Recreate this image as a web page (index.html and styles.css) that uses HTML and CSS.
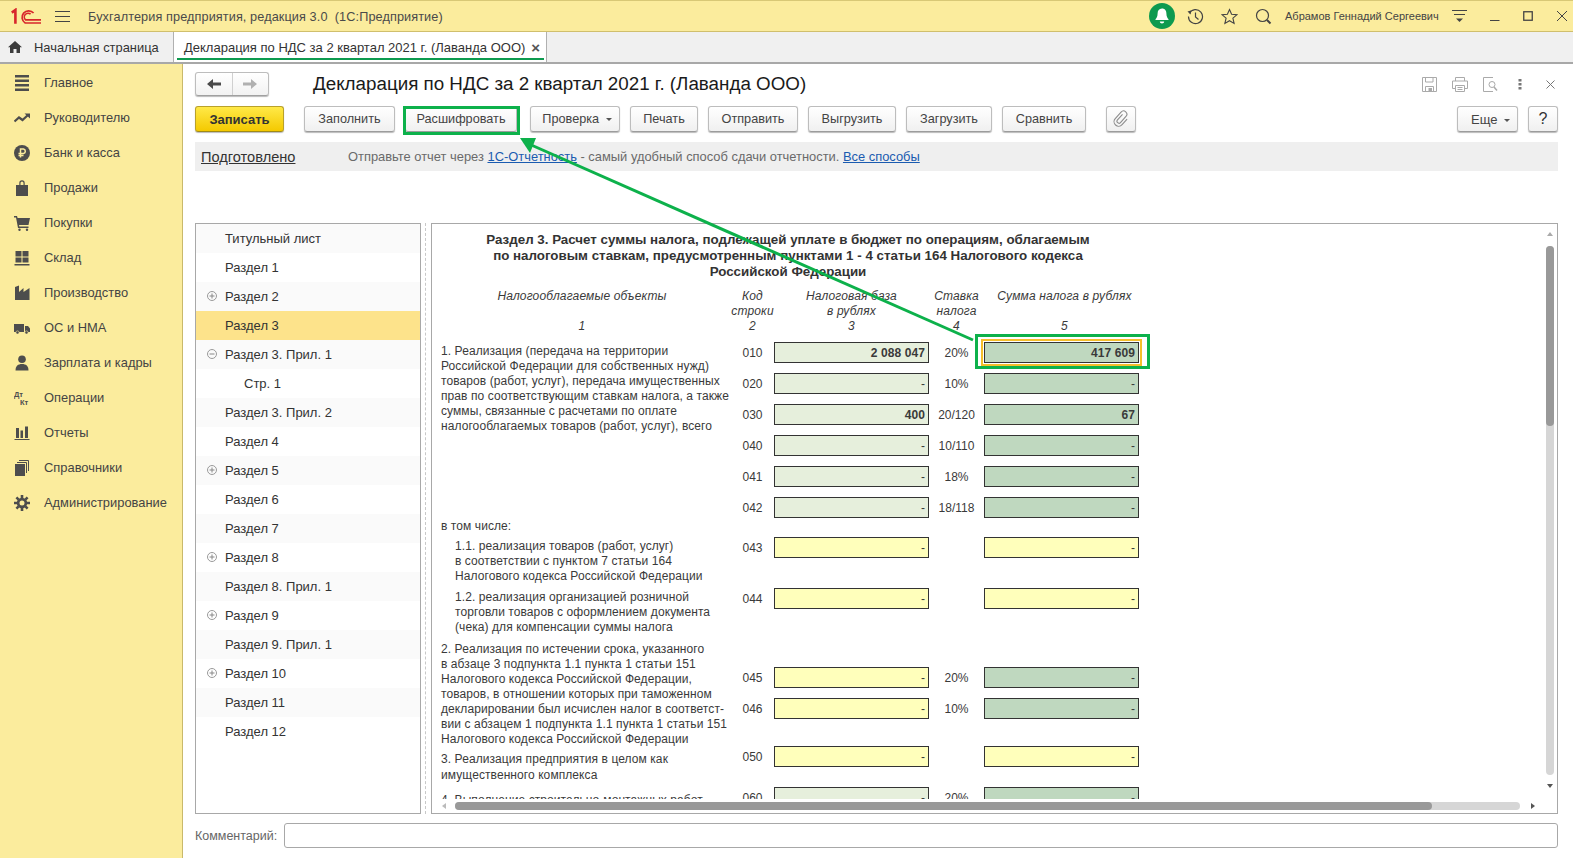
FILE: index.html
```html
<!DOCTYPE html>
<html lang="ru">
<head>
    <meta charset="UTF-8">
    <title>Декларация по НДС за 2 квартал 2021 г. (Лаванда ООО)</title>
    <link rel="stylesheet" href="styles.css">
</head>
<body>
    <div class="titlebar">
        <svg class="logo" width="30" height="17" viewBox="0 0 30 17"><path d="M0.8 4.6 4.4 2V15.8" fill="none" stroke="#d8262c" stroke-width="2.6"/><path d="M22.6 5A6.6 6.6 0 1 0 14.2 15H30" fill="none" stroke="#d8262c" stroke-width="1.7"/><path d="M19.6 6.2A3.6 3.6 0 1 0 14.6 11.9H30" fill="none" stroke="#d8262c" stroke-width="1.7"/></svg>
        <svg class="burger" width="15" height="11" viewBox="0 0 15 11"><path d="M0 .5H15M0 5.5H15M0 10.5H15" stroke="#444"/></svg>
        <span class="app-name">Бухгалтерия предприятия, редакция 3.0&nbsp; (1С:Предприятие)</span>
        <span class="spacer"></span>
        <svg class="bell" width="26" height="26" viewBox="0 0 26 26"><circle cx="13" cy="13" r="13" fill="#0d9a4f"/><path d="M13 5.5c-3 0-4.4 2.2-4.4 5 0 3-1 4.4-2.1 5.8v.7h13v-.7c-1.100-1.400-2.100-2.800-2.100-5.800 0-2.800-1.400-5-4.400-5zM10.800 18.500h4.400c0 1-1 2-2.200 2s-2.200-1-2.200-2z" fill="#fff"/></svg>
        <svg class="top-icon history" width="17" height="17" viewBox="0 0 17 17"><path d="M2.400 5.200A7 7 0 1 1 1.500 8.500M8.500 4.500V9l3 2.500" fill="none" stroke="#444" stroke-width="1.200"/><path d="M0.500 3.500 4 2.500 3.700 6.500z" fill="#444"/></svg>
        <svg class="top-icon star" width="17" height="17" viewBox="0 0 17 17"><path d="M8.500 1.500 10.600 6.300 15.800 6.800 11.900 10.200 13.100 15.400 8.500 12.700 3.900 15.400 5.100 10.200 1.200 6.800 6.400 6.300z" fill="none" stroke="#444" stroke-width="1.100"/></svg>
        <svg class="top-icon search" width="17" height="17" viewBox="0 0 17 17"><circle cx="7.500" cy="7.500" r="6" fill="none" stroke="#444" stroke-width="1.200"/><path d="M12 12 15.500 15.500" stroke="#444" stroke-width="2"/></svg>
        <span class="user-name">Абрамов Геннадий Сергеевич</span>
        <svg class="top-menu" width="15" height="13" viewBox="0 0 15 13"><path d="M0 .5H15M2 4.500H13" stroke="#444"/><path d="M4 8.500H11L7.500 12z" fill="#444"/></svg>
        <svg class="win-btn win-min" width="10" height="10" viewBox="0 0 10 10"><path d="M0 9.500H9.500" stroke="#444"/></svg>
        <svg class="win-btn win-max" width="10" height="10" viewBox="0 0 10 10"><rect x=".75" y=".75" width="8.500" height="8.500" fill="none" stroke="#444" stroke-width="1.300"/></svg>
        <svg class="win-btn win-close" width="10" height="10" viewBox="0 0 10 10"><path d="M0 0 10 10M10 0 0 10" stroke="#444"/></svg>
    </div>

    <div class="tabbar">
        <div class="tab tab-home">
            <svg width="14" height="12" viewBox="0 0 14 12"><path d="M7 0 14 6.300H12V12H8.500V8H5.500V12H2V6.300H0z" fill="#3c3c3c"/></svg>
            <span>Начальная страница</span>
        </div>
        <div class="tab tab-active">
            <span>Декларация по НДС за 2 квартал 2021 г. (Лаванда ООО)</span>
            <span class="tab-close">×</span>
        </div>
    </div>

    <div class="workspace">
        <nav class="sidebar">
            <a class="side-item">
                <svg viewBox="0 0 16 16"><path d="M1 0H15V2.500H1zM1 4.500H15V7H1zM1 9H15V11.500H1zM1 13.500H15V16H1z"/></svg>
                <span>Главное</span>
            </a>
            <a class="side-item">
                <svg viewBox="0 0 16 16"><path d="M.5 11.500 5 7.500 8.500 10 14 5" fill="none" stroke="#4d4d4d" stroke-width="2.200"/><path d="M10.500 3.500H16V8.500z"/></svg>
                <span>Руководителю</span>
            </a>
            <a class="side-item">
                <svg viewBox="0 0 16 16"><circle cx="8" cy="8" r="8"/><path d="M6.500 12.500V4H9.500A2.300 2.300 0 0 1 9.500 8.500H4.500M4.500 10.500H9.500" fill="none" stroke="#fbec9d" stroke-width="1.500"/></svg>
                <span>Банк и касса</span>
            </a>
            <a class="side-item">
                <svg viewBox="0 0 16 16"><path d="M2 5H5.300V3A2.700 2.700 0 0 1 10.700 3V5H14V16H2zM6.500 5H9.500V3A1.500 1.500 0 0 0 6.500 3z" fill-rule="evenodd"/></svg>
                <span>Продажи</span>
            </a>
            <a class="side-item">
                <svg viewBox="0 0 16 16"><path d="M0 1H3L3.600 3H16L14.500 10H5L5.300 11.500H14.500V13H4L2 2.500H0z"/><circle cx="5.500" cy="14.800" r="1.200"/><circle cx="13" cy="14.800" r="1.200"/></svg>
                <span>Покупки</span>
            </a>
            <a class="side-item">
                <svg viewBox="0 0 16 16"><path d="M1.500 1H7.500V6.500H1.500zM8.500 1H14.500V6.500H8.500zM1.500 7.500H7.500V12.500H1.500zM8.500 7.500H14.500V12.500H8.500zM.5 14H15.500V15.500H.5z"/></svg>
                <span>Склад</span>
            </a>
            <a class="side-item">
                <svg viewBox="0 0 16 16"><path d="M1 15V2L5 .5V7L9.500 3V7L15.500 3V15z"/></svg>
                <span>Производство</span>
            </a>
            <a class="side-item">
                <svg viewBox="0 0 16 16"><path d="M0 4H10V12H0zM11 6H14L16 8.500V12H11z"/><circle cx="3.500" cy="12.500" r="1.600" stroke="#fbec9d" stroke-width=".6"/><circle cx="12.500" cy="12.500" r="1.600" stroke="#fbec9d" stroke-width=".6"/></svg>
                <span>ОС и НМА</span>
            </a>
            <a class="side-item">
                <svg viewBox="0 0 16 16"><circle cx="8" cy="4.300" r="3.800"/><path d="M1.500 15.500C1.500 11 4 9 8 9s6.500 2 6.500 6.500z"/></svg>
                <span>Зарплата и кадры</span>
            </a>
            <a class="side-item">
                <svg viewBox="0 0 16 16"><text class="dtkt" x="0" y="6.500">Дт</text><text class="dtkt" x="6" y="14.500">Кт</text></svg>
                <span>Операции</span>
            </a>
            <a class="side-item">
                <svg viewBox="0 0 16 16"><path d="M2 3H5V13H2zM6.500 5.500H9V13H6.500zM11 1.500H14V13H11zM.5 14H15.500V15H.5z"/></svg>
                <span>Отчеты</span>
            </a>
            <a class="side-item">
                <svg viewBox="0 0 16 16"><path d="M1 4H11V16H1z"/><path d="M3 2.500H12.500V13M5 .5H14.500V11" fill="none" stroke="#4d4d4d"/></svg>
                <span>Справочники</span>
            </a>
            <a class="side-item">
                <svg viewBox="0 0 16 16"><path d="M8 2.800A5.200 5.200 0 1 0 8 13.200 5.200 5.200 0 1 0 8 2.800zM8 5.500A2.500 2.500 0 1 1 8 10.500 2.500 2.500 0 1 1 8 5.500z" fill-rule="evenodd"/><path d="M6.700 0H9.300V3.500H6.700zM6.700 12.500H9.300V16H6.700zM0 6.700H3.500V9.300H0zM12.500 6.700H16V9.300H12.500zM1.500 3.300 3.300 1.500 5.500 3.700 3.700 5.500zM10.500 12.300 12.300 10.500 14.500 12.700 12.700 14.500zM12.700 1.500 14.500 3.300 12.300 5.500 10.500 3.700zM3.700 10.500 5.500 12.300 3.300 14.500 1.500 12.700z"/></svg>
                <span>Администрирование</span>
            </a>
        </nav>

        <main class="main">
            <div class="headbar">
                <div class="nav-buttons">
                    <span class="nav-btn">
                        <svg width="14" height="10" viewBox="0 0 14 10"><path d="M0 5 6 0V3.500H14V6.500H6V10z" fill="#4a4a4a"/></svg>
                    </span>
                    <span class="nav-btn">
                        <svg width="14" height="10" viewBox="0 0 14 10"><path d="M14 5 8 0V3.500H0V6.500H8V10z" fill="#b0b0b0"/></svg>
                    </span>
                </div>
                <h1 class="doc-title">Декларация по НДС за 2 квартал 2021 г. (Лаванда ООО)</h1>
                <div class="head-icons">
                    <svg width="15" height="15" viewBox="0 0 15 15"><path d="M.5.500H14.500V14.500H.5zM3.500.5V5H11V.5M3.500 14.500V9.500H11.500V14.500" fill="none" stroke="#aaa"/><path d="M6.500 11H10V14H6.500z" fill="#aaa"/></svg>
                    <svg width="16" height="15" viewBox="0 0 16 15"><path d="M3.500 4V.5H12.500V4M3.500 11.500H.5V4H15.500V11.500H12.500M3.500 8.500H12.500V14.500H3.500zM5.500 10.500H10.500M5.500 12.500H10.500" fill="none" stroke="#aaa"/></svg>
                    <svg width="15" height="15" viewBox="0 0 15 15"><path d="M10 14.500H.5V.5H10" fill="none" stroke="#aaa"/><circle cx="9" cy="7.500" r="3" fill="none" stroke="#aaa"/><path d="M11 10 14 13.500" stroke="#aaa" stroke-width="1.500"/></svg>
                    <svg class="head-dots" width="4" height="11" viewBox="0 0 4 11"><path d="M.5 0H3.500V2.500H.5zM.5 4H3.500V6.500H.5zM.5 8H3.500V10.500H.5z" fill="#777"/></svg>
                    <svg class="head-close" width="9" height="9" viewBox="0 0 9 9"><path d="M.5.5 8.500 8.500M8.500.5.5 8.500" stroke="#777"/></svg>
                </div>
            </div>

            <div class="toolbar">
                <button class="btn btn-primary">Записать</button>
                <button class="btn btn-fill">Заполнить</button>
                <button class="btn btn-decode">Расшифровать</button>
                <button class="btn btn-check">Проверка <i class="caret"></i></button>
                <button class="btn btn-print">Печать</button>
                <button class="btn btn-send">Отправить</button>
                <button class="btn btn-export">Выгрузить</button>
                <button class="btn btn-import">Загрузить</button>
                <button class="btn btn-compare">Сравнить</button>
                <button class="btn btn-clip">
                    <svg width="18" height="18" viewBox="0 0 18 18"><path d="M7 4.500V12a2 2 0 0 0 4 0V3.800a3.300 3.300 0 0 0-6.600 0V12.500a4.600 4.600 0 0 0 9.200 0V5" transform="rotate(42 9 9)" fill="none" stroke="#8c8c8c" stroke-width="1.100"/></svg>
                </button>
                <span class="spacer"></span>
                <button class="btn btn-more">Еще <i class="caret"></i></button>
                <button class="btn btn-help">?</button>
            </div>

            <div class="msgbar">
                <a class="status">Подготовлено</a>
                <span class="msg">Отправьте отчет через <a class="link">1С-Отчетность</a> - самый удобный способ сдачи отчетности. <a class="link">Все способы</a></span>
            </div>

            <div class="split">
                <ul class="sections">
                    <li>Титульный лист</li>
                    <li>Раздел 1</li>
                    <li class="has-toggle"><svg class="toggle" width="10" height="10" viewBox="0 0 10 10"><circle cx="5" cy="5" r="4.500" fill="none" stroke="#999"/><path d="M2.500 5H7.500M5 2.500V7.500" stroke="#888"/></svg>Раздел 2</li>
                    <li class="current">Раздел 3</li>
                    <li class="has-toggle"><svg class="toggle" width="10" height="10" viewBox="0 0 10 10"><circle cx="5" cy="5" r="4.500" fill="none" stroke="#999"/><path d="M2.500 5H7.500" stroke="#888"/></svg>Раздел 3. Прил. 1</li>
                    <li class="nested">Стр. 1</li>
                    <li>Раздел 3. Прил. 2</li>
                    <li>Раздел 4</li>
                    <li class="has-toggle"><svg class="toggle" width="10" height="10" viewBox="0 0 10 10"><circle cx="5" cy="5" r="4.500" fill="none" stroke="#999"/><path d="M2.500 5H7.500M5 2.500V7.500" stroke="#888"/></svg>Раздел 5</li>
                    <li>Раздел 6</li>
                    <li>Раздел 7</li>
                    <li class="has-toggle"><svg class="toggle" width="10" height="10" viewBox="0 0 10 10"><circle cx="5" cy="5" r="4.500" fill="none" stroke="#999"/><path d="M2.500 5H7.500M5 2.500V7.500" stroke="#888"/></svg>Раздел 8</li>
                    <li>Раздел 8. Прил. 1</li>
                    <li class="has-toggle"><svg class="toggle" width="10" height="10" viewBox="0 0 10 10"><circle cx="5" cy="5" r="4.500" fill="none" stroke="#999"/><path d="M2.500 5H7.500M5 2.500V7.500" stroke="#888"/></svg>Раздел 9</li>
                    <li>Раздел 9. Прил. 1</li>
                    <li class="has-toggle"><svg class="toggle" width="10" height="10" viewBox="0 0 10 10"><circle cx="5" cy="5" r="4.500" fill="none" stroke="#999"/><path d="M2.500 5H7.500M5 2.500V7.500" stroke="#888"/></svg>Раздел 10</li>
                    <li>Раздел 11</li>
                    <li>Раздел 12</li>
                </ul>
                <div class="splitter"></div>
                <section class="panel">
                    <div class="panel-body">
                        <div class="form">
                            <h2 class="form-title">Раздел 3. Расчет суммы налога, подлежащей уплате в бюджет по операциям, облагаемым<br>по налоговым ставкам, предусмотренным пунктами 1 - 4 статьи 164 Налогового кодекса<br>Российской Федерации</h2>
                            <div class="form-grid">
                                <div class="r r0">
                                    <div class="head head-1">Налогооблагаемые объекты<br><br>1</div>
                                    <div class="head code">Код<br>строки<br>2</div>
                                    <div class="head base">Налоговая база<br>в рублях<br>3</div>
                                    <div class="head rate">Ставка<br>налога<br>4</div>
                                    <div class="head sum head-5">Сумма налога в рублях<br><br>5</div>
                                </div>
                                <p class="note sec-1">1. Реализация (передача на территории<br>Российской Федерации для собственных нужд)<br>товаров (работ, услуг), передача имущественных<br>прав по соответствующим ставкам налога, а также<br>суммы, связанные с расчетами по оплате<br>налогооблагаемых товаров (работ, услуг), всего</p>
                                <div class="r r1">
                                    <span class="code">010</span><span class="field base light strong">2 088 047</span><span class="rate">20%</span><span class="field sum dark strong focus">417 609</span>
                                </div>
                                <div class="r r2">
                                    <span class="code">020</span><span class="field base light">-</span><span class="rate">10%</span><span class="field sum dark">-</span>
                                </div>
                                <div class="r r3">
                                    <span class="code">030</span><span class="field base light strong">400</span><span class="rate">20/120</span><span class="field sum dark strong">67</span>
                                </div>
                                <div class="r r4">
                                    <span class="code">040</span><span class="field base light">-</span><span class="rate">10/110</span><span class="field sum dark">-</span>
                                </div>
                                <div class="r r5">
                                    <span class="code">041</span><span class="field base light">-</span><span class="rate">18%</span><span class="field sum dark">-</span>
                                </div>
                                <div class="r r6">
                                    <span class="code">042</span><span class="field base light">-</span><span class="rate">18/118</span><span class="field sum dark">-</span>
                                </div>
                                <p class="note sec-incl">в том числе:</p>
                                <p class="note indent sec-11">1.1. реализация товаров (работ, услуг)<br>в соответствии с пунктом 7 статьи 164<br>Налогового кодекса Российской Федерации</p>
                                <div class="r r8">
                                    <span class="code">043</span><span class="field base input">-</span><span class="field sum input">-</span>
                                </div>
                                <p class="note indent sec-12">1.2. реализация организацией розничной<br>торговли товаров с оформлением документа<br>(чека) для компенсации суммы налога</p>
                                <div class="r r9">
                                    <span class="code">044</span><span class="field base input">-</span><span class="field sum input">-</span>
                                </div>
                                <p class="note sec-2">2. Реализация по истечении срока, указанного<br>в абзаце 3 подпункта 1.1 пункта 1 статьи 151<br>Налогового кодекса Российской Федерации,<br>товаров, в отношении которых при таможенном<br>декларировании был исчислен налог в соответст-<br>вии с абзацем 1 подпункта 1.1 пункта 1 статьи 151<br>Налогового кодекса Российской Федерации</p>
                                <div class="r r11">
                                    <span class="code">045</span><span class="field base input">-</span><span class="rate">20%</span><span class="field sum dark">-</span>
                                </div>
                                <div class="r r12">
                                    <span class="code">046</span><span class="field base input">-</span><span class="rate">10%</span><span class="field sum dark">-</span>
                                </div>
                                <p class="note sec-3">3. Реализация предприятия в целом как<br>имущественного комплекса</p>
                                <div class="r r13">
                                    <span class="code">050</span><span class="field base input">-</span><span class="field sum input">-</span>
                                </div>
                                <p class="note sec-4">4. Выполнение строительно-монтажных работ</p>
                                <div class="r r14">
                                    <span class="code">060</span><span class="field base light">-</span><span class="rate">20%</span><span class="field sum dark">-</span>
                                </div>
                            </div>
                        </div>
                        <div class="vscroll">
                            <i class="arrow-up"></i>
                            <div class="vtrack"><div class="vthumb"></div></div>
                            <i class="arrow-down"></i>
                        </div>
                    </div>
                    <div class="hscroll">
                        <i class="arrow-left"></i>
                        <div class="htrack"><div class="hthumb"></div></div>
                        <i class="arrow-right"></i>
                    </div>
                </section>
            </div>

            <div class="comment">
                <label>Комментарий:</label>
                <div class="comment-input"></div>
            </div>
        </main>
    </div>

    <!-- green marks drawn over the screenshot -->
    <svg class="marks" width="1573" height="858" viewBox="0 0 1573 858">
        <rect x="404.500" y="107.500" width="114" height="26" fill="none" stroke="#0db14b" stroke-width="3"/>
        <rect x="976.500" y="335.500" width="172" height="32" fill="none" stroke="#0db14b" stroke-width="3"/>
        <path d="M973 340 529 144" stroke="#0db14b" stroke-width="3"/>
        <path d="M520 138H536L530 153z" fill="#0db14b"/>
    </svg>
</body>
</html>
```

FILE: styles.css
```css
* {
    box-sizing: border-box;
}
body {
    margin: 0;
    width: 1573px;
    height: 858px;
    overflow: hidden;
    position: relative;
    display: flex;
    flex-direction: column;
    font-family: "Liberation Sans", Arial, sans-serif;
    font-size: 13px;
    color: #333;
    background-color: #fff;
}
.spacer {
    flex: 1;
}

/* title bar */
.titlebar {
    height: 32px;
    flex: none;
    display: flex;
    align-items: center;
    background-color: #fbec9d;
    border-top: 1px solid #d8c876;
    border-bottom: 1px solid #d0bf6d;
}
.logo {
    margin-left: 11px;
}
.burger {
    margin-left: 14px;
}
.app-name {
    margin: 1px 0 0 18px;
    color: #4a4a4a;
    font-size: 12.7px;
    letter-spacing: 0.1px;
}
.bell {
    margin-right: 12px;
}
.top-icon {
    margin-right: 17px;
}
.search {
    margin-right: 8px;
}
.user-name {
    margin-left: 5px;
    width: 154px;
    font-size: 11px;
    white-space: nowrap;
    color: #444;
}
.top-menu {
    margin-left: 13px;
}
.win-btn {
    display: block;
}
.win-min {
    margin-left: 23px;
}
.win-max {
    margin-left: 23px;
}
.win-close {
    margin-left: 24px;
    margin-right: 6px;
}

/* tabs */
.tabbar {
    height: 32px;
    flex: none;
    display: flex;
    background-color: #f0f0f0;
    border-bottom: 2px solid #a8a8a8;
}
.tab {
    height: 30px;
    display: flex;
    align-items: center;
    white-space: nowrap;
}
.tab-home {
    width: 174px;
    padding-left: 8px;
    gap: 12px;
    font-size: 12.9px;
    border-right: 1px solid #b0b0b0;
}
.tab-active {
    width: 373px;
    padding-left: 10px;
    gap: 6px;
    position: relative;
    background-color: #fff;
    border-right: 1px solid #b0b0b0;
}
.tab-active::after {
    content: "";
    position: absolute;
    left: 3px;
    right: 2px;
    bottom: 2px;
    height: 2px;
    background-color: #0d9a4f;
}
.tab-close {
    font-size: 15px;
    font-weight: bold;
    color: #555;
}

/* left sections menu */
.workspace {
    flex: 1;
    min-height: 0;
    display: flex;
}
.sidebar {
    width: 183px;
    flex: none;
    padding-top: 1px;
    background-color: #fbec9d;
    border-right: 1px solid #c9b96b;
}
.side-item {
    height: 35px;
    display: flex;
    align-items: center;
    padding-left: 14px;
    font-size: 12.9px;
    color: #444;
    white-space: nowrap;
}
.side-item svg {
    width: 16px;
    height: 16px;
    flex: none;
    margin-right: 14px;
    fill: #4d4d4d;
}
.dtkt {
    font-size: 7.5px;
    font-weight: bold;
}

/* document area */
.main {
    flex: 1;
    min-width: 0;
    padding: 8px 15px 0 12px;
    display: flex;
    flex-direction: column;
}
.headbar {
    height: 24px;
    flex: none;
    display: flex;
    align-items: center;
}
.nav-buttons {
    width: 74px;
    height: 24px;
    display: flex;
    background: linear-gradient(#fff, #f2f2f2);
    border: 1px solid #bdbdbd;
    border-bottom-color: #a0a0a0;
    border-radius: 3px;
    box-shadow: 0 1px 1px #bbb;
}
.nav-btn {
    flex: 1;
    display: flex;
    align-items: center;
    justify-content: center;
}
.nav-btn + .nav-btn {
    border-left: 1px solid #d0d0d0;
}
.doc-title {
    margin: 0 0 0 44px;
    font-size: 18.8px;
    font-weight: normal;
    color: #1a1a1a;
    white-space: nowrap;
}
.head-icons {
    margin-left: auto;
    display: flex;
    align-items: center;
    gap: 15px;
}
.head-dots {
    margin-left: 5px;
}
.head-close {
    margin-left: 9px;
    margin-right: 3px;
}

.toolbar {
    height: 26px;
    flex: none;
    margin-top: 10px;
    display: flex;
    gap: 10px;
}
.btn {
    height: 26px;
    padding: 0;
    font: 12.7px "Liberation Sans", Arial, sans-serif;
    color: #444;
    white-space: nowrap;
    background: linear-gradient(#fff, #f0f0f0);
    border: 1px solid #bdbdbd;
    border-bottom-color: #9c9c9c;
    border-radius: 3px;
    box-shadow: 0 1px 1px #bbb;
}
.btn-primary {
    width: 89px;
    font-size: 13px;
    font-weight: bold;
    color: #333;
    background: linear-gradient(#ffe948, #f4c900);
    border-color: #b9a12a;
    border-bottom-color: #a08a16;
}
.btn-fill {
    width: 91px;
    margin-left: 10px;
}
.btn-decode {
    width: 112px;
    margin-right: 3px;
}
.btn-check {
    width: 90px;
    padding-left: 4px;
}
.btn-print {
    width: 68px;
}
.btn-send {
    width: 90px;
}
.btn-export {
    width: 88px;
}
.btn-import {
    width: 86px;
}
.btn-compare {
    width: 84px;
}
.btn-clip {
    width: 30px;
    margin-left: 10px;
    display: flex;
    align-items: center;
    justify-content: center;
}
.btn-help {
    width: 30px;
    font-size: 16px;
    color: #333;
}
.btn-more {
    width: 61px;
    padding-left: 6px;
    font-size: 13px;
}
.caret {
    display: inline-block;
    margin-left: 3px;
    vertical-align: 2px;
    border-top: 3px solid #555;
    border-left: 3px solid transparent;
    border-right: 3px solid transparent;
}

.msgbar {
    height: 29px;
    flex: none;
    margin-top: 10px;
    padding-left: 6px;
    display: flex;
    align-items: center;
    background-color: #efefef;
}
.status {
    width: 147px;
    font-size: 14.6px;
    color: #333;
    text-decoration: underline;
}
.msg {
    font-size: 12.9px;
    color: #6a6a6a;
    white-space: nowrap;
}
.link {
    color: #1a5bb0;
    text-decoration: underline;
}

/* sections list and form */
.split {
    height: 591px;
    flex: none;
    margin-top: 52px;
    display: flex;
}
.sections {
    width: 226px;
    flex: none;
    margin: 0;
    padding: 0;
    list-style: none;
    border: 1px solid #a8a8a8;
}
.sections li {
    height: 29px;
    padding-left: 29px;
    position: relative;
    line-height: 29px;
}
.sections li:nth-child(odd) {
    background-color: #fafafa;
}
.sections li.current {
    background-color: #fde38b;
}
.sections li.nested {
    padding-left: 48px;
}
.toggle {
    position: absolute;
    left: 11px;
    top: 9px;
}
.splitter {
    width: 10px;
    flex: none;
    margin-left: 0;
    position: relative;
}
.splitter::after {
    content: "";
    position: absolute;
    left: 4px;
    top: 0;
    bottom: 0;
    border-left: 1px dashed #c8c8c8;
}
.panel {
    flex: 1;
    min-width: 0;
    display: flex;
    flex-direction: column;
    border: 1px solid #a8a8a8;
}
.panel-body {
    flex: 1;
    min-height: 0;
    display: flex;
}
.form {
    flex: 1;
    min-width: 0;
    overflow: hidden;
    padding: 8px 0 0 9px;
    font-size: 12px;
    color: #3a3a3a;
}
.form-title {
    width: 694px;
    margin: 0 0 8px;
    font-size: 13.35px;
    line-height: 16px;
    text-align: center;
    color: #333;
}
.form-grid {
    display: grid;
    grid-template-columns: 290px 43px 155px 55px 155px;
    grid-template-rows: 54px 31px 31px 31px 31px 31px 21px 19px 51px 53px 26px 31px 48px 41px 30px;
}
.r {
    display: contents;
}
.r0 > * { grid-row: 1; }
.r1 > * { grid-row: 2; }
.r2 > * { grid-row: 3; }
.r3 > * { grid-row: 4; }
.r4 > * { grid-row: 5; }
.r5 > * { grid-row: 6; }
.r6 > * { grid-row: 7; }
.r8 > * { grid-row: 9; }
.r9 > * { grid-row: 10; }
.r11 > * { grid-row: 12; }
.r12 > * { grid-row: 13; }
.r13 > * { grid-row: 14; }
.r14 > * { grid-row: 15; }
.code {
    grid-column: 2;
}
.base {
    grid-column: 3;
}
.rate {
    grid-column: 4;
}
.sum {
    grid-column: 5;
}
span.code,
span.rate {
    height: 22px;
    padding-top: 1px;
    line-height: 21px;
    text-align: center;
}
.head {
    padding-top: 1px;
    font-style: italic;
    line-height: 15px;
    letter-spacing: 0.15px;
    text-align: center;
    white-space: nowrap;
}
.head-1 {
    grid-column: 1;
    padding-right: 8px;
}
.head-5 {
    padding-left: 6px;
}
.field {
    height: 21px;
    padding-right: 3px;
    line-height: 21px;
    text-align: right;
    border: 1px solid #333;
}
.strong {
    font-weight: bold;
    letter-spacing: 0.1px;
}
.light {
    background-color: #e6efdc;
}
.dark {
    background-color: #bfd8bf;
}
.input {
    background-color: #ffffbb;
}
.focus {
    outline: 2px solid #f5bf2a;
    outline-offset: 1px;
}
.note {
    grid-column: 1;
    margin: 0;
    line-height: 15px;
    letter-spacing: 0.08px;
    white-space: nowrap;
}
.indent {
    padding-left: 14px;
}
.sec-1 {
    grid-row: 2 / 8;
    margin-top: 2px;
}
.sec-incl {
    grid-row: 8;
    margin-top: 1px;
}
.sec-11 {
    grid-row: 9;
    margin-top: 2px;
}
.sec-12 {
    grid-row: 10;
    margin-top: 2px;
}
.sec-2 {
    grid-row: 11 / 14;
    margin-top: 1px;
}
.sec-3 {
    grid-row: 14;
    margin-top: 5px;
    line-height: 16px;
}
.sec-4 {
    grid-row: 15;
    margin-top: 6px;
}

/* scrollbars */
.vscroll {
    width: 15px;
    flex: none;
    padding: 8px 3px 0 4px;
    display: flex;
    flex-direction: column;
    align-items: center;
}
.vtrack {
    width: 8px;
    height: 529px;
    flex: none;
    margin: 10px 0 9px;
    background-color: #d6d6d6;
    border-radius: 4px;
}
.vthumb {
    height: 180px;
    background-color: #999;
    border-radius: 4px;
}
.arrow-up {
    border-bottom: 4px solid #aaa;
    border-left: 3px solid transparent;
    border-right: 3px solid transparent;
}
.arrow-down {
    border-top: 4px solid #555;
    border-left: 3px solid transparent;
    border-right: 3px solid transparent;
}
.hscroll {
    height: 14px;
    flex: none;
    padding-left: 10px;
    display: flex;
    align-items: center;
}
.htrack {
    width: 1065px;
    height: 8px;
    margin: 0 11px 0 9px;
    background-color: #d6d6d6;
    border-radius: 4px;
}
.hthumb {
    width: 977px;
    height: 8px;
    background-color: #999;
    border-radius: 4px;
}
.arrow-left {
    border-right: 4px solid #bbb;
    border-top: 3px solid transparent;
    border-bottom: 3px solid transparent;
}
.arrow-right {
    border-left: 4px solid #555;
    border-top: 3px solid transparent;
    border-bottom: 3px solid transparent;
}

.comment {
    height: 25px;
    flex: none;
    margin-top: 9px;
    display: flex;
    align-items: center;
    gap: 7px;
}
.comment label {
    color: #666;
    font-size: 12.5px;
}
.comment-input {
    flex: 1;
    height: 25px;
    border: 1px solid #a8a8a8;
    border-radius: 3px;
}

.marks {
    position: absolute;
    left: 0;
    top: 0;
}
```
